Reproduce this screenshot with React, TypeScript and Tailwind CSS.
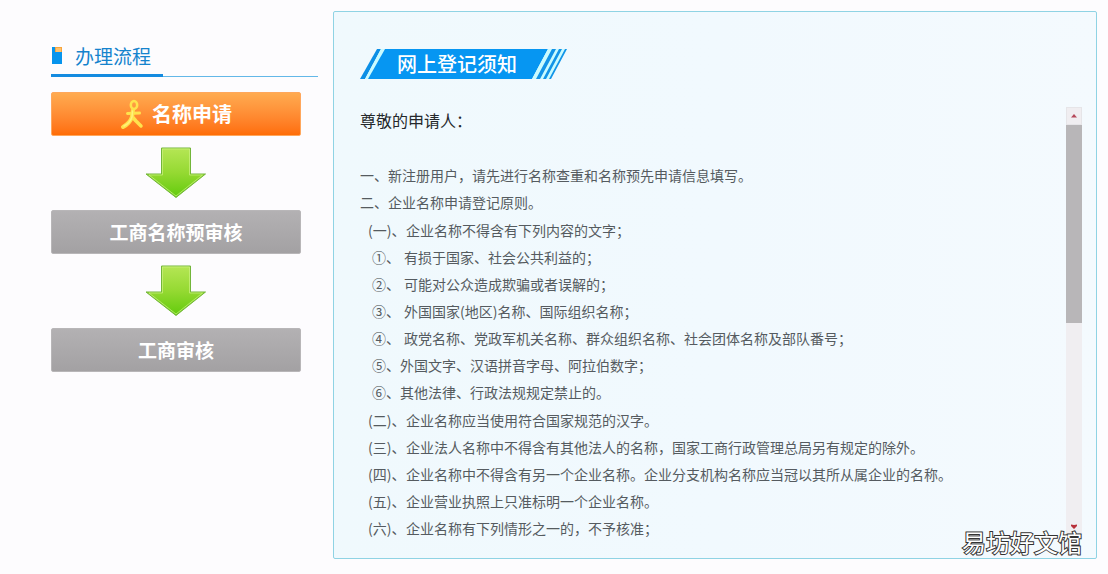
import React from 'react';

type Rule = { mark: string; text: string; kind: 'lead' | 'section' | 'item' | 'tight' };

const rules: Rule[] = [
  { mark: '(一)、', text: '企业名称不得含有下列内容的文字；', kind: 'lead' },
  { mark: '①、', text: '有损于国家、社会公共利益的；', kind: 'item' },
  { mark: '②、', text: '可能对公众造成欺骗或者误解的；', kind: 'item' },
  { mark: '③、', text: '外国国家(地区)名称、国际组织名称；', kind: 'item' },
  { mark: '④、', text: '政党名称、党政军机关名称、群众组织名称、社会团体名称及部队番号；', kind: 'item' },
  { mark: '⑤、', text: '外国文字、汉语拼音字母、阿拉伯数字；', kind: 'tight' },
  { mark: '⑥、', text: '其他法律、行政法规规定禁止的。', kind: 'tight' },
  { mark: '(二)、', text: '企业名称应当使用符合国家规范的汉字。', kind: 'lead' },
  { mark: '(三)、', text: '企业法人名称中不得含有其他法人的名称，国家工商行政管理总局另有规定的除外。', kind: 'section' },
  { mark: '(四)、', text: '企业名称中不得含有另一个企业名称。企业分支机构名称应当冠以其所从属企业的名称。', kind: 'section' },
  { mark: '(五)、', text: '企业营业执照上只准标明一个企业名称。', kind: 'section' },
  { mark: '(六)、', text: '企业名称有下列情形之一的，不予核准；', kind: 'section' },
];

const rowClass = {
  lead: 'flex pl-2 pt-px',
  section: 'flex pl-2',
  item: 'flex pl-3',
  tight: 'flex pl-3',
};

const markClass = {
  lead: 'w-[38px] shrink-0',
  section: 'w-[38px] shrink-0',
  item: 'w-8 shrink-0',
  tight: 'w-7 shrink-0',
};

function DownArrow({ id }: { id: string }) {
  return (
    <svg width="62" height="52" viewBox="0 0 62 52" aria-hidden="true">
      <defs>
        <linearGradient id={id} x1="0" y1="0" x2="0" y2="1">
          <stop offset="0" stopColor="#b5e655" />
          <stop offset="0.5" stopColor="#95d932" />
          <stop offset="1" stopColor="#62cb0c" />
        </linearGradient>
      </defs>
      <path d="M16.5 1h29v26h15L31 50.5 1 27h15.500z" fill={`url(#${id})`} stroke="#72b53a" strokeWidth="1" strokeLinejoin="round" />
      <path d="M17.500 28V2H44.500V28H57.500L31 49 4 28z" fill="none" stroke="#cdf283" strokeWidth="1" opacity="0.7" />
    </svg>
  );
}

function Walker() {
  return (
    <svg width="24" height="31" viewBox="0 0 24 31" fill="none" strokeLinecap="round" strokeLinejoin="round" aria-hidden="true">
      <g stroke="#ffe34d">
        <ellipse cx="14" cy="6" rx="3.200" ry="4" strokeWidth="2.500" />
        <path d="M13 11L12 18" strokeWidth="4" />
        <path d="M7.500 14.500L19.500 14" strokeWidth="3" />
        <path d="M12 18Q10 24 3 28" strokeWidth="4" />
        <path d="M12.500 18L16 22L21 27" strokeWidth="3.500" />
      </g>
      <path d="M12.500 12L12 18Q10 24 4 27" stroke="#fff27d" strokeWidth="1.500" />
    </svg>
  );
}

function GreyStep({ children }: { children: React.ReactNode }) {
  return (
    <button
      type="button"
      className="flex h-11 w-[250px] items-center justify-center rounded-[2px] border border-[#b8b6b8] bg-linear-to-b from-[#b3b1b3] to-[#a3a1a3] text-[19px] font-bold text-white"
    >
      {children}
    </button>
  );
}

export default function App() {
  return (
    <main className="relative flex min-h-screen items-start bg-[#fdfcfe] pr-[11px] pb-[15px] pl-[51px] pt-[11px] font-['Noto_Sans_CJK_SC',sans-serif]">
      <aside className="w-[267px] shrink-0 pt-[30px]">
        <div className="flex h-[36px] items-center gap-3 border-b border-[#63b8e8] pb-1.5">
          <svg width="12" height="19" viewBox="0 0 12 19" aria-hidden="true">
            <path d="M1 1h10v17H1z" fill="#0794ed" />
            <path d="M4 1h7v5H4z" fill="#f8a43c" />
            <path d="M5 3h5M5 5h5" stroke="#ffe0a5" />
          </svg>
          <h2 className="text-[19px] leading-7 text-[#1583cd]">办理流程</h2>
        </div>
        <div className="-mt-[3px] h-[3px] w-28 bg-[#148be0]" />

        <div className="flex w-[250px] flex-col items-center gap-[11px] pt-[15px]">
          <button
            type="button"
            className="flex h-11 w-[250px] items-center justify-center gap-2 rounded-[2px] border border-[#ffa75c] bg-linear-to-b from-[#ffab50] to-[#ff6d05] text-[20px] font-bold text-white"
          >
            <Walker />
            名称申请
          </button>
          <DownArrow id="arrow-first" />
          <GreyStep>工商名称预审核</GreyStep>
          <DownArrow id="arrow-second" />
          <GreyStep>工商审核</GreyStep>
        </div>
      </aside>

      <section className="ml-[15px] min-w-0 flex-1 rounded-[2px] border border-[#8fd3e4] bg-linear-to-r from-[#f0f9fd] via-[#f1f9fe] to-[#f4fafe] pb-[15px] pl-[26px] pr-[14px] pt-[37px]">
        <div className="grid h-[30px] w-[208px]">
          <svg className="col-start-1 row-start-1" width="208" height="30" viewBox="0 0 208 30" aria-hidden="true">
            <path d="M0 30L17 0h4L5 30z" fill="#0b8fe6" />
            <path d="M5 30L21 0h4L8 30z" fill="#c9fbff" />
            <path d="M8 30L25 0h163l-16 30z" fill="#0696f2" />
            <path d="M172 30L188 0h19l-17 30z" fill="#c9fbff" />
            <path d="M176 30L192 0h4l-16 30zM183 30L199 0h3l-16 30zM189 30L205 0h2l-16 30z" fill="#1294e8" />
          </svg>
          <h1 className="col-start-1 row-start-1 pl-[37px] text-[20px] font-medium leading-[29px] text-white">网上登记须知</h1>
        </div>

        <div className="mt-7 flex h-[436px] items-start">
          <div tabIndex={0} className="h-full min-w-0 flex-1 overflow-y-auto text-[14px] leading-[27px] text-[#555b60] outline-none [scrollbar-width:none]">
            <p className="pb-7 text-[16px] text-[#25282b]">尊敬的申请人：</p>
            <p>一、新注册用户，请先进行名称查重和名称预先申请信息填写。</p>
            <p>二、企业名称申请登记原则。</p>
            <ol>
              {rules.map((rule) => (
                <li key={rule.mark} className={rowClass[rule.kind]}>
                  <span className={markClass[rule.kind]}>{rule.mark}</span>
                  <span>{rule.text}</span>
                </li>
              ))}
            </ol>
          </div>
          <div className="flex h-[428px] w-4 shrink-0 flex-col bg-[#f0eef1]">
            <button type="button" aria-label="向上滚动" className="flex h-[18px] items-center justify-center border border-[#e6e5e8]">
              <svg width="6" height="4" viewBox="0 0 6 4" aria-hidden="true"><path d="M3 0L6 3.500H0z" fill="#b5495a" /></svg>
            </button>
            <div className="h-[198px] bg-[#b8b6b8]" />
            <button type="button" aria-label="向下滚动" className="mt-auto flex h-[18px] items-center justify-center">
              <svg width="6" height="5" viewBox="0 0 6 5" aria-hidden="true"><path d="M0 0.500L3 1 6 0.500V2L3 5 0 2z" fill="#b8303a" /></svg>
            </button>
          </div>
        </div>
      </section>

      <p className="absolute bottom-[14px] right-[26px] text-[24px] leading-9 text-white [-webkit-text-stroke:2px_#333] [paint-order:stroke_fill]">易坊好文馆</p>
    </main>
  );
}
